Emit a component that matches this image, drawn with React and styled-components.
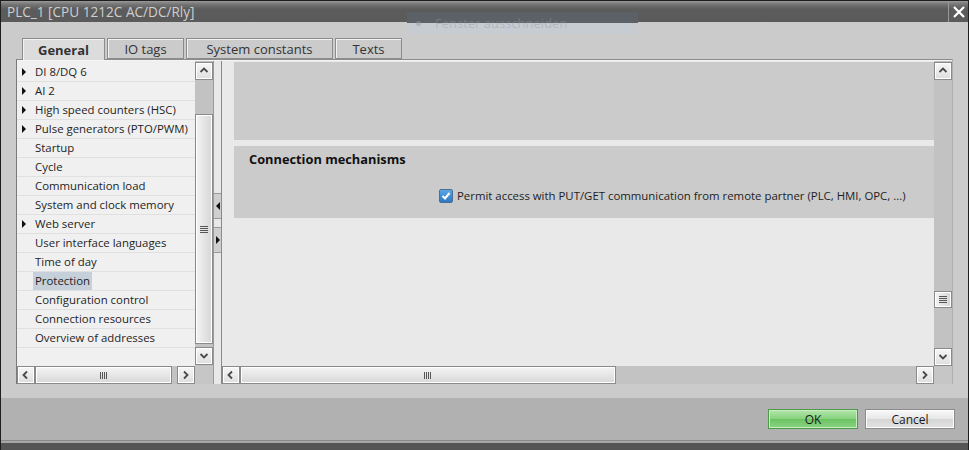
import styled, { createGlobalStyle } from "styled-components";

const Global = createGlobalStyle`
  html, body { margin: 0; padding: 0; background: #cbcbcb; }
  body { font-family: "Open Sans", "DejaVu Sans", sans-serif; color: #1e1e1e; }
`;

const treeItems = [
  { label: "DI 8/DQ 6", arrow: true },
  { label: "AI 2", arrow: true },
  { label: "High speed counters (HSC)", arrow: true },
  { label: "Pulse generators (PTO/PWM)", arrow: true },
  { label: "Startup" },
  { label: "Cycle" },
  { label: "Communication load" },
  { label: "System and clock memory" },
  { label: "Web server", arrow: true },
  { label: "User interface languages" },
  { label: "Time of day" },
  { label: "Protection", selected: true },
  { label: "Configuration control" },
  { label: "Connection resources" },
  { label: "Overview of addresses" },
];

const tabs = [
  { label: "General", w: 83, active: true },
  { label: "IO tags", w: 77 },
  { label: "System constants", w: 147 },
  { label: "Texts", w: 67 },
];

const chevrons = {
  up: "M1.5 6 L5 2.5 L8.5 6",
  down: "M1.5 3 L5 6.5 L8.5 3",
  left: "M6 1.5 L2.5 5 L6 8.5",
  right: "M3 1.5 L6.5 5 L3 8.5",
};

function Chevron({ dir }) {
  return (
    <svg width="10" height="10" viewBox="0 0 10 10">
      <path d={chevrons[dir]} fill="none" stroke="#4a4a4a" strokeWidth="1.8" />
    </svg>
  );
}

function Triangle({ dir }) {
  const d = dir === "left" ? "M4 0 L4 8 L0 4 Z" : "M0 0 L4 4 L0 8 Z";
  return (
    <svg width="4" height="8" viewBox="0 0 4 8">
      <path d={d} fill="#111" />
    </svg>
  );
}

function App() {
  return (
    <>
      <Global />
      <Window>
        <TitleBar>
          <Title>PLC_1 [CPU 1212C AC/DC/Rly]</Title>
          <CloseBtn>
            <svg width="12" height="12" viewBox="0 0 12 12">
              <path d="M1 1 L11 11 M11 1 L1 11" stroke="#fff" strokeWidth="2.2" />
            </svg>
          </CloseBtn>
        </TitleBar>

        <Ghost>
          <GhostDot />
          Fenster ausschneiden
        </Ghost>

        <Body>
          <TabRow>
            {tabs.map((t) => (
              <Tab key={t.label} $w={t.w} $active={t.active}>
                {t.label}
              </Tab>
            ))}
          </TabRow>

          <Panel>
            <TreeCol>
              <TreeTop>
                <TreeList>
                  {treeItems.map((it) => (
                    <TreeRow key={it.label}>
                      <ArrowSlot>{it.arrow && <Triangle dir="right" />}</ArrowSlot>
                      <TreeLabel $selected={it.selected}>{it.label}</TreeLabel>
                    </TreeRow>
                  ))}
                </TreeList>
                <VScroll>
                  <ScrollBtn>
                    <Chevron dir="up" />
                  </ScrollBtn>
                  <VTrack>
                    <VThumb style={{ marginTop: 34, height: 230 }}>
                      <HGrip />
                    </VThumb>
                  </VTrack>
                  <ScrollBtn>
                    <Chevron dir="down" />
                  </ScrollBtn>
                </VScroll>
              </TreeTop>
              <HScroll>
                <ScrollBtn>
                  <Chevron dir="left" />
                </ScrollBtn>
                <HThumb style={{ width: 137 }}>
                  <VGrip />
                </HThumb>
                <HTrackFill />
                <ScrollBtn>
                  <Chevron dir="right" />
                </ScrollBtn>
                <Corner />
              </HScroll>
            </TreeCol>

            <Splitter>
              <SplitBtn>
                <Triangle dir="left" />
              </SplitBtn>
              <SplitGap />
              <SplitBtn>
                <Triangle dir="right" />
              </SplitBtn>
            </Splitter>

            <MainCol>
              <MainTop>
                <Content>
                  <Block $h={78} />
                  <Section>
                    <SectionTitle>Connection mechanisms</SectionTitle>
                    <CheckRow>
                      <CheckBox>
                        <svg width="10" height="10" viewBox="0 0 10 10">
                          <path d="M1.5 5 L4 7.5 L8.5 2" fill="none" stroke="#fff" strokeWidth="2" />
                        </svg>
                      </CheckBox>
                      Permit access with PUT/GET communication from remote partner (PLC, HMI, OPC, ...)
                    </CheckRow>
                  </Section>
                </Content>
                <VScroll $wide>
                  <ScrollBtn>
                    <Chevron dir="up" />
                  </ScrollBtn>
                  <VTrack>
                    <VThumb style={{ marginTop: 211, height: 17 }}>
                      <HGrip />
                    </VThumb>
                  </VTrack>
                  <ScrollBtn>
                    <Chevron dir="down" />
                  </ScrollBtn>
                </VScroll>
              </MainTop>
              <HScroll>
                <ScrollBtn>
                  <Chevron dir="left" />
                </ScrollBtn>
                <HThumb style={{ width: 376 }}>
                  <VGrip />
                </HThumb>
                <HTrackFill />
                <ScrollBtn>
                  <Chevron dir="right" />
                </ScrollBtn>
                <Corner />
              </HScroll>
            </MainCol>
          </Panel>
        </Body>

        <Footer>
          <Button $primary>OK</Button>
          <Button>Cancel</Button>
        </Footer>
        <BottomEdge />
      </Window>
    </>
  );
}

const Window = styled.div`
  position: relative;
  width: 969px;
  height: 450px;
  box-sizing: border-box;
  border: 1px solid #1e1e1e;
  border-bottom: none;
  display: flex;
  flex-direction: column;
  overflow: hidden;
  background: #cbcbcb;
`;

const TitleBar = styled.div`
  flex: none;
  height: 21px;
  display: flex;
  align-items: center;
  justify-content: space-between;
  background: linear-gradient(#999 0, #777 3px, #5c5c5c 8px, #5a5a5a 100%);
`;

const Title = styled.div`
  padding-left: 6px;
  font-size: 13.6px;
  color: #cfcfcf;
  white-space: nowrap;
`;

const CloseBtn = styled.div`
  width: 19px;
  height: 21px;
  display: flex;
  align-items: center;
  justify-content: center;
  border-left: 1px solid #999;
`;

const Ghost = styled.div`
  position: absolute;
  left: 406px;
  top: 11px;
  width: 231px;
  height: 22px;
  display: flex;
  align-items: center;
  gap: 14px;
  padding-left: 9px;
  box-sizing: border-box;
  font-size: 13px;
  color: rgba(150, 155, 162, 0.45);
  background: linear-gradient(#5c6067 0, #5c6067 11px, #c6ccd2 11px, #c6ccd2 100%);
`;

const GhostDot = styled.span`
  width: 5px;
  height: 5px;
  border-radius: 50%;
  background: rgba(150, 155, 162, 0.5);
`;

const Body = styled.div`
  flex: 1;
  display: flex;
  flex-direction: column;
  padding: 16px 15px 0 15px;
  background: #cbcbcb;
`;

const TabRow = styled.div`
  display: flex;
  gap: 2px;
  height: 21px;
  padding-left: 6px;
  align-items: flex-end;
`;

const Tab = styled.div`
  box-sizing: border-box;
  width: ${(p) => p.$w}px;
  height: ${(p) => (p.$active ? 22 : 21)}px;
  margin-bottom: ${(p) => (p.$active ? -1 : 0)}px;
  position: relative;
  z-index: ${(p) => (p.$active ? 1 : 0)};
  border: 1px solid #8c8c8c;
  border-bottom: ${(p) => (p.$active ? "none" : "1px solid #8c8c8c")};
  box-shadow: inset 1px 1px 0 #f2f2f2;
  background: ${(p) => (p.$active ? "#dcdcdc" : "#cbcbcb")};
  display: flex;
  align-items: center;
  justify-content: center;
  font-size: 13px;
  font-weight: ${(p) => (p.$active ? 700 : 400)};
  color: #333;
`;

const Panel = styled.div`
  box-sizing: border-box;
  height: 325px;
  display: flex;
  border-top: 1px solid #8c8c8c;
  border-left: 1px solid #7a7a7a;
  border-right: 1px solid #b0b0b0;
  box-shadow: inset 0 1px 0 #f4f4f4;
  padding-top: 1px;
  background: #e4e4e4;
`;

const TreeCol = styled.div`
  width: 196px;
  flex: none;
  display: flex;
  flex-direction: column;
`;

const TreeTop = styled.div`
  flex: 1;
  display: flex;
  min-height: 0;
`;

const TreeList = styled.div`
  flex: 1;
  background: #f0f0f0;
  padding-top: 2px;
  overflow: hidden;
`;

const TreeRow = styled.div`
  box-sizing: border-box;
  height: 19px;
  display: flex;
  align-items: center;
  padding-left: 5px;
  border-bottom: 1px solid #e0e0e0;
  font-size: 11.4px;
  white-space: nowrap;
`;

const ArrowSlot = styled.span`
  width: 13px;
  flex: none;
  display: flex;
  align-items: center;
`;

const TreeLabel = styled.span`
  line-height: 18px;
  padding: 0 2px;
  margin-left: -2px;
  background: ${(p) => (p.$selected ? "#c6d0da" : "transparent")};
`;

const VScroll = styled.div`
  width: 18px;
  flex: none;
  display: flex;
  flex-direction: column;
  padding: 1px 0 ${(p) => (p.$wide ? 0 : 1)}px;
  background: #c2c2c2;
`;

const ScrollBtn = styled.div`
  box-sizing: border-box;
  width: 18px;
  height: 18px;
  flex: none;
  border: 1px solid #8a8a8a;
  box-shadow: inset 0 0 0 1px #fff;
  background: linear-gradient(#f7f7f7, #dedede);
  display: flex;
  align-items: center;
  justify-content: center;
`;

const VTrack = styled.div`
  flex: 1;
  display: flex;
  flex-direction: column;
`;

const VThumb = styled.div`
  box-sizing: border-box;
  flex: none;
  border: 1px solid #8a8a8a;
  box-shadow: inset 0 0 0 1px #fff;
  background: linear-gradient(90deg, #f4f4f4, #d6d6d6);
  display: flex;
  align-items: center;
  justify-content: center;
`;

const HGrip = styled.div`
  width: 8px;
  height: 7px;
  background: repeating-linear-gradient(#555 0, #555 1px, transparent 1px, transparent 2px);
`;

const HScroll = styled.div`
  height: 18px;
  flex: none;
  display: flex;
  background: #c3c3c3;
`;

const HThumb = styled.div`
  box-sizing: border-box;
  flex: none;
  height: 18px;
  border: 1px solid #8a8a8a;
  box-shadow: inset 0 0 0 1px #fff;
  background: linear-gradient(#f4f4f4, #d8d8d8);
  display: flex;
  align-items: center;
  justify-content: center;
`;

const VGrip = styled.div`
  width: 8px;
  height: 7px;
  background: repeating-linear-gradient(90deg, #555 0, #555 1px, transparent 1px, transparent 2px);
`;

const HTrackFill = styled.div`
  flex: 1;
`;

const Corner = styled.div`
  width: 18px;
  flex: none;
  background: #c6c6c6;
`;

const Splitter = styled.div`
  box-sizing: border-box;
  width: 9px;
  flex: none;
  display: flex;
  flex-direction: column;
  justify-content: center;
  border-left: 1px solid #9a9a9a;
  border-right: 1px solid #8a8a8a;
  background: #e8e8e8;
`;

const SplitBtn = styled.div`
  height: 24px;
  display: flex;
  align-items: center;
  justify-content: center;
  background: #cfcfcf;
  border-top: 1px solid #9a9a9a;
  border-bottom: 1px solid #9a9a9a;
`;

const SplitGap = styled.div`
  height: 8px;
`;

const MainCol = styled.div`
  flex: 1;
  display: flex;
  flex-direction: column;
  min-width: 0;
`;

const MainTop = styled.div`
  flex: 1;
  display: flex;
  min-height: 0;
`;

const Content = styled.div`
  flex: 1;
  display: flex;
  flex-direction: column;
  gap: 6px;
  padding: 1px 0 0 12px;
  background: #e9e9e9;
  overflow: hidden;
`;

const Block = styled.div`
  height: ${(p) => p.$h}px;
  flex: none;
  background: #cbcbcb;
`;

const Section = styled.div`
  height: 72px;
  flex: none;
  box-sizing: border-box;
  padding: 4px 0 0 15px;
  background: #cbcbcb;
`;

const SectionTitle = styled.div`
  font-size: 12.8px;
  font-weight: 700;
  line-height: 18px;
  color: #111;
`;

const CheckRow = styled.div`
  margin-top: 20px;
  padding-left: 190px;
  display: flex;
  align-items: center;
  gap: 4px;
  font-size: 11.4px;
  line-height: 16px;
  white-space: nowrap;
`;

const CheckBox = styled.span`
  box-sizing: border-box;
  width: 14px;
  height: 14px;
  border: 1px solid #4a6f93;
  border-radius: 2px;
  background: linear-gradient(#5aa6e6, #2c78c4);
  display: flex;
  align-items: center;
  justify-content: center;
`;

const Footer = styled.div`
  flex: none;
  height: 42px;
  margin-top: 14px;
  display: flex;
  align-items: flex-start;
  justify-content: flex-end;
  gap: 7px;
  padding: 11px 13px 0 0;
  box-sizing: border-box;
  background: #b1b1b1;
`;

const Button = styled.div`
  box-sizing: border-box;
  width: 90px;
  height: 20px;
  display: flex;
  align-items: center;
  justify-content: center;
  font-size: 12px;
  color: #1a1a1a;
  border: 1px solid ${(p) => (p.$primary ? "#4f9a4a" : "#8c8c8c")};
  box-shadow: inset 0 0 0 1px ${(p) => (p.$primary ? "#c6efc0" : "#fdfdfd")};
  background: ${(p) =>
    p.$primary
      ? "linear-gradient(#b3e6ac, #86d27c 50%, #6cc262 51%, #8bd582)"
      : "linear-gradient(#fafafa, #e6e6e6 50%, #d6d6d6 51%, #e2e2e2)"};
`;

const BottomEdge = styled.div`
  flex: none;
  height: 10px;
  background: linear-gradient(#8a8a8a 0, #8a8a8a 1px, #a8a8a8 1px, #a8a8a8 3px, #555 3px, #555 100%);
`;

export default App;
